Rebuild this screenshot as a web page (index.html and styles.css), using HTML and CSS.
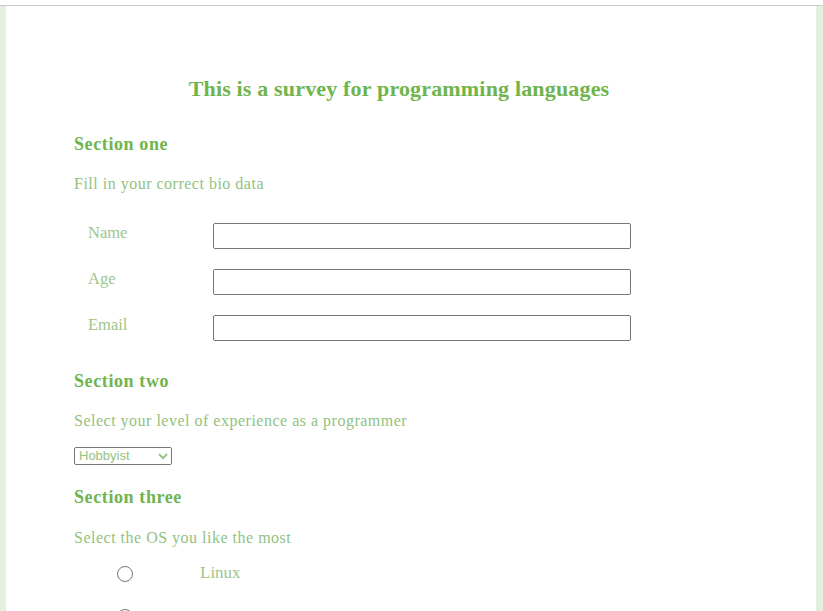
FILE: index.html
```html
<!DOCTYPE html>
<html lang="en">
<head>
<meta charset="utf-8">
<title>Survey</title>
<link rel="stylesheet" href="styles.css">
</head>
<body>
<div class="topbar"></div>
<div class="page">
  <main class="sheet">
    <form class="survey">
      <h1 class="title">This is a survey for programming languages</h1>

      <h2 class="section section-one">Section one</h2>
      <p class="text text-bio">Fill in your correct bio data</p>
      <div class="rows">
        <div class="row"><label class="label" for="name">Name</label><input class="field" id="name" type="text"></div>
        <div class="row"><label class="label" for="age">Age</label><input class="field" id="age" type="text"></div>
        <div class="row"><label class="label" for="email">Email</label><input class="field" id="email" type="text"></div>
      </div>

      <h2 class="section section-two">Section two</h2>
      <p class="text text-level">Select your level of experience as a programmer</p>
      <div class="select-wrap">
        <select class="level">
          <option>Hobbyist</option>
          <option>Junior</option>
          <option>Senior</option>
        </select>
        <svg class="chevron" width="10" height="7" viewBox="0 0 10 7" aria-hidden="true">
          <path d="M1 1.2 L5 5.2 L9 1.2" fill="none" stroke="#8fc07c" stroke-width="1.8"/>
        </svg>
      </div>

      <h2 class="section section-three">Section three</h2>
      <p class="text text-os">Select the OS you like the most</p>
      <div class="radios">
        <label class="radio-row"><input class="radio" type="radio" name="os"><span class="radio-label">Linux</span></label>
        <label class="radio-row"><input class="radio" type="radio" name="os"><span class="radio-label radio-label-low">Windows</span></label>
      </div>
    </form>
  </main>
</div>
</body>
</html>
```
FILE: styles.css
```css
html, body {
  margin: 0;
  padding: 0;
  background: #ffffff;
  overflow: hidden;
}

.topbar {
  height: 5px;
  border-bottom: 1px solid #c8c8c8;
  background: #ffffff;
}

.page {
  background: #e2f0de;
  padding: 0 7px 0 6px;
  min-height: 620px;
}

.sheet {
  background: #ffffff;
  min-height: 620px;
  padding-left: 68px;
  padding-top: 71px;
  box-sizing: border-box;
}

.survey {
  width: 650px;
  display: flex;
  flex-direction: column;
  align-items: flex-start;
  font-family: "Liberation Serif", "Times New Roman", serif;
}

.title {
  align-self: stretch;
  margin: 0;
  text-align: center;
  font-size: 22px;
  line-height: 24px;
  font-weight: bold;
  letter-spacing: 0.17px;
  color: #6fb44c;
}

.section {
  margin: 0;
  font-size: 18px;
  line-height: 20px;
  font-weight: bold;
  letter-spacing: 0.6px;
  color: #6fb44c;
}

.section-one { margin-top: 33px; }
.section-two { margin-top: 30px; }
.section-three { margin-top: 22px; }

.text {
  margin: 0;
  font-size: 16px;
  line-height: 20px;
  letter-spacing: 0.5px;
  color: #92c27f;
}

.text-bio { margin-top: 20px; }
.text-level { margin-top: 20px; }
.text-os { margin-top: 21px; }

.rows {
  margin-top: 29px;
  display: flex;
  flex-direction: column;
  gap: 20px;
}

.row {
  display: flex;
  align-items: flex-start;
}

.label {
  width: 125px;
  padding-left: 14px;
  font-size: 16.5px;
  line-height: 20px;
  color: #9dc68b;
}

.field {
  width: 418px;
  height: 26px;
  box-sizing: border-box;
  margin: 0;
  border: 1px solid #767676;
  border-radius: 2px;
  background: #ffffff;
  padding: 1px 2px;
}

.select-wrap {
  position: relative;
  margin-top: 16px;
  width: 98px;
  height: 18px;
}

.level {
  display: block;
  -webkit-appearance: none;
  appearance: none;
  width: 98px;
  height: 18px;
  box-sizing: border-box;
  margin: 0;
  border: 1px solid #767676;
  border-radius: 2px;
  background: #ffffff;
  color: #95c383;
  font-family: "Liberation Sans", Arial, sans-serif;
  font-size: 13px;
  line-height: 16px;
  padding: 0 0 0 4px;
}

.chevron {
  position: absolute;
  left: 84px;
  top: 6px;
  pointer-events: none;
}

.radios {
  margin-top: 15px;
  display: flex;
  flex-direction: column;
  gap: 23px;
}

.radio-row {
  display: flex;
  align-items: flex-start;
  padding-left: 43px;
}

.radio {
  margin: 3px 0 0 0;
  width: 16px;
  height: 16px;
}

.radio-label {
  margin-left: 67px;
  font-size: 17px;
  line-height: 20px;
  color: #9dc68b;
}

.radio-label-low {
  margin-top: 4px;
}
```
